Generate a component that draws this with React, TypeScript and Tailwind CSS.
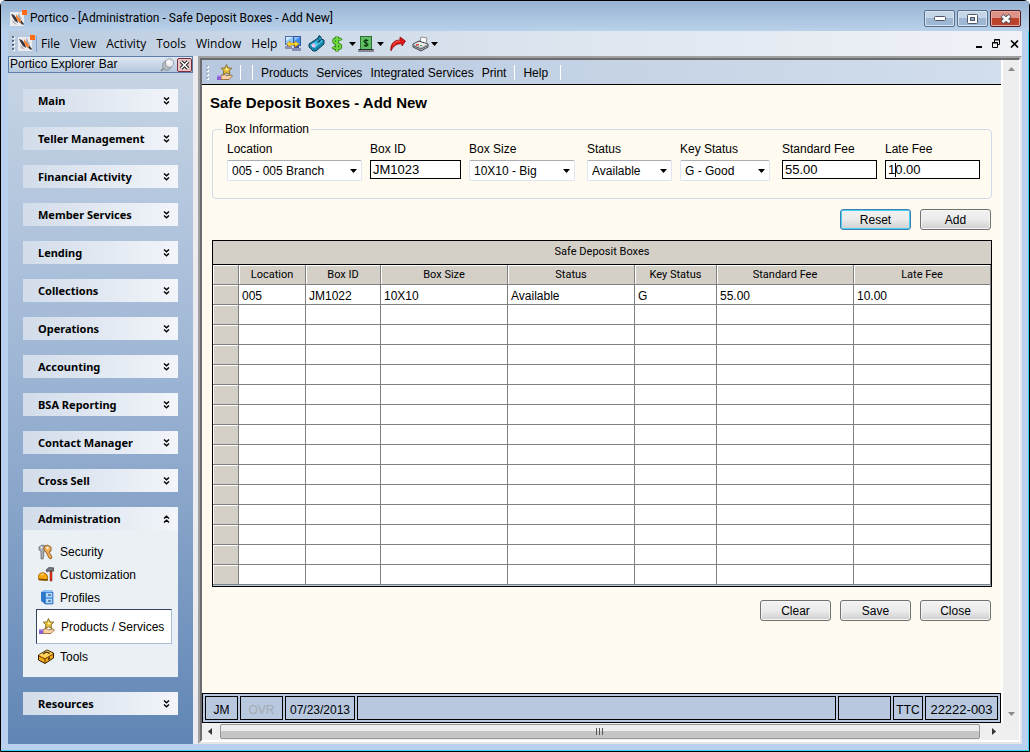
import type { ReactNode } from 'react';

interface Column {
  label: string;
  width: string;
}

const groups = [
  'Main',
  'Teller Management',
  'Financial Activity',
  'Member Services',
  'Lending',
  'Collections',
  'Operations',
  'Accounting',
  'BSA Reporting',
  'Contact Manager',
  'Cross Sell',
];

const columns: Column[] = [
  { label: 'Location', width: 'w-[67px]' },
  { label: 'Box ID', width: 'w-[75px]' },
  { label: 'Box Size', width: 'w-[127px]' },
  { label: 'Status', width: 'w-[127px]' },
  { label: 'Key Status', width: 'w-[82px]' },
  { label: 'Standard Fee', width: 'w-[137px]' },
  { label: 'Late Fee', width: 'w-[137px]' },
];

const rows: string[][] = [['005', 'JM1022', '10X10', 'Available', 'G', '55.00', '10.00']];
const ROW_COUNT = 15;

/* ---------- Icons ---------- */

function PorticoLogo() {
  return (
    <svg width="17" height="17" viewBox="0 0 17 17" aria-hidden="true">
      <rect x="0" y="2" width="14" height="14" fill="#ececee" />
      <path d="M1 4l3 1 3 4 1 4-3-2-2-3z" fill="#33363d" />
      <path d="M8 9l3 1 3 4-1 1-4-3z" fill="#33363d" />
      <path d="M2 10l3 2 2 3-4-2z" fill="#b4b7bd" />
      <path d="M9 2l1 4 2 3-3 1-2-1z" fill="#a9adb4" />
      <path d="M6 4l2 3 3 3 0 3-3-2-2-3z" fill="#f58233" />
      <rect x="12" y="0" width="5" height="5" fill="#ff6a13" />
    </svg>
  );
}

function StarHandIcon() {
  return (
    <svg width="16" height="17" viewBox="0 0 16 17" aria-hidden="true">
      <path d="M9.500 .5l1.500 3.400 3.800.3-2.700 2.600.8 3.700-3.400-1.700-3.400 1.700.8-3.700L4.200 4.200 8 3.900z" fill="#e9bd35" stroke="#7d6a2b" strokeWidth=".9" />
      <path d="M9.500 3l.8 2 2 .4-2 1.100-1.800-.4z" fill="#fdf0a0" />
      <path d="M4 11.500l4-1 1.500 1.500 4.500-1 1.500 1-3.500 3.500H4z" fill="#f9d3a6" stroke="#8d5c2b" strokeWidth=".8" />
      <path d="M0 11h4v5H0z" fill="#8a5fd6" />
      <path d="M0 11h4v1.500H0z" fill="#b79cf0" />
    </svg>
  );
}

function MonitorsIcon() {
  return (
    <svg width="18" height="16" viewBox="0 0 18 16" aria-hidden="true">
      <rect x="1.500" y=".5" width="8" height="8" fill="#8cc6ff" stroke="#4a6fae" />
      <rect x="9.500" y=".5" width="7" height="9" fill="#3f8cf0" stroke="#36599a" />
      <path d="M2 1h7L2 5z" fill="#d3ebff" />
      <path d="M10 1h6l-6 4z" fill="#86bbfa" />
      <path d="M1 10h7v3H1zM8 12h9v3H8z" fill="#8a8fb8" />
      <path d="M10 10h5v2h-5zM3 9h3v1H3z" fill="#4a4f86" />
      <path d="M2.500 8L6 5v2h5V5l4 3-4 3V9H6v2z" fill="#ffd83a" stroke="#b58b00" strokeWidth=".6" />
    </svg>
  );
}

function PhoneIcon() {
  return (
    <svg width="17" height="17" viewBox="0 0 17 17" aria-hidden="true">
      <path d="M1 9l9-6 1-2.500L13 2v2l3 1v4l-8 7H5l-4-4z" fill="#1487ad" stroke="#0e3c58" strokeWidth="1" />
      <path d="M2 10l10-6 3 2-8 7z" fill="#4cc3e2" />
      <path d="M11 1l2 1v3l-2 1z" fill="#2aa6cc" stroke="#0e3c58" strokeWidth=".5" />
      <circle cx="5.500" cy="10.500" r="2" fill="#f6bdea" />
      <path d="M9 7l3-2 1 1-3 2z" fill="#0e3c58" />
    </svg>
  );
}

function DollarIcon() {
  return (
    <svg width="12" height="16" viewBox="0 0 12 16" aria-hidden="true">
      <path d="M10 4.500C9 2.500 3 2.500 3 5.200c0 3 6.500 2.300 6.500 5.200 0 2.600-6 2.600-7.500.3M6 .5v15" fill="none" stroke="#2a7a12" strokeWidth="3.600" />
      <path d="M10 4.500C9 2.500 3 2.500 3 5.200c0 3 6.500 2.300 6.500 5.200 0 2.600-6 2.600-7.500.3M6 1v14" fill="none" stroke="#6fd63c" strokeWidth="2" />
    </svg>
  );
}

function CashIcon() {
  return (
    <svg width="16" height="16" viewBox="0 0 16 16" aria-hidden="true">
      <rect x="2.500" y=".5" width="11" height="13" fill="#5fc063" stroke="#2f6e35" />
      <path d="M10 5C9.500 3.800 6 3.800 6 5.500S10 7 10 8.700 6.500 10.200 6 9M8 3v8" fill="none" stroke="#0a330f" strokeWidth="1.100" />
      <path d="M0 13h16v3H0z" fill="#85888e" />
      <path d="M1 13h14v1H1z" fill="#2c2e33" />
    </svg>
  );
}

function RedArrowIcon() {
  return (
    <svg width="16" height="16" viewBox="0 0 16 16" aria-hidden="true">
      <path d="M1 15C0 8 4 4 10 4V1l5.500 4-3.500 5V8C7 7 3 10 1 15z" fill="#e01515" stroke="#8c0a0a" strokeWidth=".8" />
      <path d="M3 9c2-3 4-4 7-4" fill="none" stroke="#ff7b6b" strokeWidth=".8" />
    </svg>
  );
}

function PrinterIcon() {
  return (
    <svg width="17" height="16" viewBox="0 0 17 16" aria-hidden="true">
      <path d="M8 6l1-5 6 1-1 6z" fill="#fff" stroke="#777" strokeWidth=".8" />
      <path d="M1 8l6-3 9 3v3l-7 4-8-4z" fill="#b9bbbf" stroke="#3f4246" strokeWidth="1" />
      <path d="M2 8l5-2 8 2-6 3z" fill="#eceeef" />
      <path d="M2 10l7 3 6-3" fill="none" stroke="#55585c" strokeWidth="1" />
      <path d="M4 8h3v1.500H4z" fill="#d64040" />
      <path d="M8 9h2v1H8z" fill="#39a539" />
    </svg>
  );
}

function KeysIcon() {
  return (
    <svg width="15" height="16" viewBox="0 0 15 16" aria-hidden="true">
      <path d="M1 3l3-2 4 1v4L6 7v2l-1 1 1 1-1 4H3V7L1 6z" fill="#a9acb1" stroke="#6a6d72" strokeWidth=".8" />
      <path d="M6 3l3-2 4 2v4l-2 1 3 5-1 2-2-1-3-6-2-2z" fill="#efae55" stroke="#8f5a1b" strokeWidth=".9" />
      <circle cx="9.500" cy="4" r="1.300" fill="#fff3dc" />
      <circle cx="3.500" cy="3.500" r="1" fill="#fff" />
    </svg>
  );
}

function HelmetHammerIcon() {
  return (
    <svg width="16" height="15" viewBox="0 0 16 15" aria-hidden="true">
      <path d="M0 11c0-4 3-6 6-5 3 .5 4 3 3.500 6L9 13.500 1 13z" fill="#f8a80c" stroke="#8d5600" strokeWidth=".8" />
      <path d="M3 8c1-1 2-1 3-1" stroke="#ffe492" strokeWidth="1.200" />
      <path d="M1 12l9 1" stroke="#5d3800" strokeWidth="1" />
      <path d="M12 4h2v10h-2z" fill="#e0361c" stroke="#7e1609" strokeWidth=".5" />
      <path d="M8 3l3-2.500L16 1v3h-5L9 5z" fill="#777b80" stroke="#34373b" strokeWidth=".7" />
    </svg>
  );
}

function CabinetIcon() {
  return (
    <svg width="14" height="15" viewBox="0 0 14 15" aria-hidden="true">
      <path d="M1 2l4-2h7v14H5l-4-3z" fill="#2f78cc" />
      <path d="M5 2h8v12H5z" fill="#5ba3ea" stroke="#1d55a3" strokeWidth=".6" />
      <path d="M1 2l4-2h7l1 2H5z" fill="#8fc3f6" />
      <path d="M6 3h6v4H6zM6 9h6v4H6z" fill="#b5d9fb" />
      <path d="M8 5h3M8 11h3" stroke="#12396f" strokeWidth="1.200" />
    </svg>
  );
}

function ToolboxIcon() {
  return (
    <svg width="16" height="15" viewBox="0 0 16 15" aria-hidden="true">
      <path d="M.5 6L9 1l6.500 3v5L7 14.500.5 11z" fill="#f2a818" stroke="#2e1d00" strokeWidth="1" />
      <path d="M1 6l8-4.500L15 4.500 7 9z" fill="#ffd35c" />
      <path d="M1 7l6 3 8-5M7 10v4" fill="none" stroke="#6b3f00" strokeWidth="1" />
      <path d="M5 5l3-2 3 1v1" fill="none" stroke="#2e1d00" strokeWidth="1.100" />
      <path d="M10 9l2-1v2l-2 1z" fill="#4a2d00" />
    </svg>
  );
}

function PinIcon() {
  return (
    <svg width="15" height="14" viewBox="0 0 15 14" aria-hidden="true">
      <path d="M1 13l4-4" stroke="#777" strokeWidth="1.200" />
      <ellipse cx="7" cy="7.500" rx="4.500" ry="4.800" fill="#b5b9c0" stroke="#85898f" strokeWidth=".7" />
      <circle cx="9.500" cy="5" r="4.200" fill="#e9ebef" stroke="#888c93" strokeWidth=".8" />
      <circle cx="8.500" cy="4" r="1.500" fill="#fff" />
    </svg>
  );
}

function DoubleChevron({ up = false }: { up?: boolean }) {
  return (
    <svg width="7" height="8" viewBox="0 0 7 8" className={up ? 'rotate-180' : ''} aria-hidden="true">
      <path d="M1 .5l2.500 2.300L6 .5M1 4.500l2.500 2.300L6 4.500" fill="none" stroke="#000" strokeWidth="1.400" />
    </svg>
  );
}

function DownArrow({ className = '' }: { className?: string }) {
  return (
    <svg width="7" height="4" viewBox="0 0 7 4" className={className} aria-hidden="true">
      <path d="M0 0h7L3.500 4z" fill="#000" />
    </svg>
  );
}

/* ---------- Small parts ---------- */

function Grip({ color }: { color: string }) {
  return (
    <svg width="3" height="15" viewBox="0 0 3 15" aria-hidden="true">
      {[0, 4, 8, 12].map((y) => (
        <g key={y}>
          <rect x="1" y={y + 1} width="2" height="2" fill="#fff" />
          <rect x="0" y={y} width="2" height="2" fill={color} />
        </g>
      ))}
    </svg>
  );
}

function Separator() {
  return <span className="h-[15px] w-px bg-white" />;
}

function PushButton({ children, focused = false }: { children: ReactNode; focused?: boolean }) {
  return (
    <button
      type="button"
      className={`h-[21px] w-[71px] rounded-[3px] border bg-linear-to-b from-[#f2f2f2] via-[#ebebeb] via-50% to-[#cfcfcf] pt-[2px] text-center text-[12px] leading-[17px] ${
        focused ? 'border-[#3c7fb1] shadow-[inset_0_0_0_1px_#48d0f5]' : 'border-[#707070] shadow-[inset_0_0_0_1px_#f6f6f6]'
      }`}
    >
      {children}
    </button>
  );
}

function Field({ id, label, className, children }: { id: string; label: string; className?: string; children: ReactNode }) {
  return (
    <div className={`flex flex-col ${className ?? ''}`}>
      <label htmlFor={id} className="mb-[3px] h-4 text-[12px] leading-4">
        {label}
      </label>
      {children}
    </div>
  );
}

function SelectBox({ id, value }: { id: string; value: string }) {
  return (
    <div className="relative">
      <select
        id={id}
        defaultValue={value}
        className="block h-[21px] w-full appearance-none rounded-[2px] border border-[#dfe5f0] border-t-[#abadb3] bg-white pl-1 pt-[2px] text-[12px] leading-[17px]"
      >
        <option>{value}</option>
      </select>
      <DownArrow className="pointer-events-none absolute top-[9px] right-[5px]" />
    </div>
  );
}

function TextBox({ id, value }: { id: string; value: string }) {
  return <input id={id} type="text" defaultValue={value} className="block h-[19px] w-full border border-black bg-white px-[2px] text-[13px] leading-[17px]" />;
}

/* ---------- Window chrome ---------- */

function TitleBar() {
  return (
    <header className="flex h-[30px] items-start bg-linear-to-b from-[#98b3d3] to-[#b9d1ea] pl-2 pr-2">
      <span className="mt-[9px] ml-px">
        <PorticoLogo />
      </span>
      <h1 className="ml-[3px] flex-1 pt-[9px] font-[Roboto,sans-serif] text-[12px] leading-4">
        Portico - [Administration - Safe Deposit Boxes - Add New]
      </h1>
      <div className="mt-[9px] flex gap-[2px]">
        <button type="button" aria-label="Minimize" className="flex h-[17px] w-[31px] items-center justify-center rounded-[2px] border border-[#5a6f8c] bg-linear-to-b from-[#c5d6e9] from-50% to-[#9db7d4] to-50% shadow-[inset_0_0_0_1px_#d5e3f2]">
          <svg width="12" height="5" viewBox="0 0 12 5" aria-hidden="true">
            <rect x=".5" y=".5" width="11" height="4" rx="1" fill="#fff" stroke="#535666" />
          </svg>
        </button>
        <button type="button" aria-label="Maximize" className="flex h-[17px] w-[31px] items-center justify-center rounded-[2px] border border-[#5a6f8c] bg-linear-to-b from-[#c5d6e9] from-50% to-[#9db7d4] to-50% shadow-[inset_0_0_0_1px_#d5e3f2]">
          <svg width="11" height="10" viewBox="0 0 11 10" aria-hidden="true">
            <rect x=".5" y=".5" width="10" height="9" rx="1" fill="#fff" stroke="#535666" />
            <rect x="3.500" y="3.500" width="4" height="3" fill="#8fa9c8" stroke="#535666" />
          </svg>
        </button>
        <button type="button" aria-label="Close window" className="flex h-[17px] w-[31px] items-center justify-center rounded-[2px] border border-[#4f1b24] bg-linear-to-b from-[#dc9285] from-50% to-[#bb432c] to-50% shadow-[inset_0_0_0_1px_#e5aca3]">
          <svg width="12" height="10" viewBox="0 0 12 10" aria-hidden="true">
            <path d="M2 1.500l8 7M10 1.500l-8 7" stroke="#535666" strokeWidth="4.400" />
            <path d="M2.500 2l7 6M9.500 2l-7 6" stroke="#fff" strokeWidth="2.600" />
          </svg>
        </button>
      </div>
    </header>
  );
}

function MenuBar() {
  return (
    <nav className="flex h-[25px] items-center bg-linear-to-r from-[#b9cadf] via-[#dbe4ee] to-[#f0f2f7] pl-1 pr-[3px] font-['Open_Sans',sans-serif] text-[12px] leading-4">
      <Grip color="#5a6f92" />
      <span className="ml-[3px]">
        <PorticoLogo />
      </span>
      <span className="ml-px h-4 w-px bg-[#7ba0d4]" />
      <div className="ml-1 flex gap-[10px]">
        <button type="button">File</button>
        <button type="button">View</button>
        <button type="button">Activity</button>
        <button type="button">Tools</button>
        <button type="button">Window</button>
        <button type="button">Help</button>
      </div>
      <div className="ml-[7px] flex flex-1 items-center gap-[6px]">
        <button type="button" aria-label="Connections"><MonitorsIcon /></button>
        <button type="button" aria-label="Phone"><PhoneIcon /></button>
        <button type="button" aria-label="Currency" className="flex items-center gap-[6px]">
          <DollarIcon />
          <DownArrow />
        </button>
        <button type="button" aria-label="Cash drawer" className="-ml-1 flex items-center gap-[3px]">
          <CashIcon />
          <DownArrow />
        </button>
        <button type="button" aria-label="Forward"><RedArrowIcon /></button>
        <button type="button" aria-label="Print" className="flex items-center gap-[2px]">
          <PrinterIcon />
          <DownArrow />
        </button>
      </div>
      <div className="flex items-center gap-[10px]">
        <button type="button" aria-label="Minimize document">
          <svg width="6" height="9" viewBox="0 0 6 9" aria-hidden="true"><path d="M0 7h6v2H0z" /></svg>
        </button>
        <button type="button" aria-label="Restore document">
          <svg width="8" height="9" viewBox="0 0 8 9" fill="none" stroke="#000" aria-hidden="true">
            <path d="M2.500 3V.5h5v5H6M2 1h6" />
            <path d="M.5 3.500h5v5h-5zM0 4h6" />
          </svg>
        </button>
        <button type="button" aria-label="Close document">
          <svg width="9" height="8" viewBox="0 0 9 8" aria-hidden="true"><path d="M1 .5l7 7M8 .5l-7 7" stroke="#000" strokeWidth="1.600" /></svg>
        </button>
      </div>
    </nav>
  );
}

/* ---------- Explorer bar ---------- */

function GroupHeader({ label, open = false }: { label: string; open?: boolean }) {
  return (
    <button
      type="button"
      aria-expanded={open}
      className="flex h-[23px] w-full items-center justify-between bg-linear-to-r from-[#d2dcea] to-[#f2f5fa] pr-2 pl-[15px] text-left font-['Noto_Sans',sans-serif] text-[11px] leading-4 font-bold"
    >
      {label}
      <DoubleChevron up={open} />
    </button>
  );
}

function ExplorerBar() {
  return (
    <aside className="flex w-[185px] shrink-0 flex-col">
      <div className="flex h-[17px] items-center border border-[#5f7ea8] bg-linear-to-b from-[#dfe8f2] to-[#b5c7de]">
        <h2 className="flex-1 pl-px text-[12px] leading-[15px]">Portico Explorer Bar</h2>
        <button type="button" aria-label="Auto hide"><PinIcon /></button>
        <button type="button" aria-label="Close explorer bar" className="ml-[2px] flex h-[14px] w-[15px] items-center justify-center rounded-[2px] border border-[#7c2d3a] bg-[#e8c6c6]">
          <svg width="11" height="10" viewBox="0 0 11 10" aria-hidden="true">
            <path d="M2 1.500l7 7M9 1.500l-7 7" stroke="#222" strokeWidth="3.600" />
            <path d="M2 1.500l7 7M9 1.500l-7 7" stroke="#fff" strokeWidth="1.600" />
          </svg>
        </button>
      </div>
      <div className="flex flex-1 flex-col gap-[15px] bg-linear-to-b from-[#c6d4e5] via-[#9db5d4] via-45% to-[#6186b5] px-[15px] pt-4 pb-4">
        {groups.map((group) => (
          <GroupHeader key={group} label={group} />
        ))}
        <section>
          <GroupHeader label="Administration" open />
          <ul className="bg-[#eaf0f4] pt-[10px] pb-[9px] text-[12px] leading-4">
            <li className="flex h-[23px] items-center pl-[15px]">
              <span className="w-[22px]"><KeysIcon /></span>
              <a href="#security">Security</a>
            </li>
            <li className="flex h-[23px] items-center pl-[15px]">
              <span className="w-[22px]"><HelmetHammerIcon /></span>
              <a href="#customization">Customization</a>
            </li>
            <li className="flex h-[23px] items-center pl-[15px]">
              <span className="w-[22px] pl-[2px]"><CabinetIcon /></span>
              <a href="#profiles">Profiles</a>
            </li>
            <li className="mr-[6px] ml-[13px] flex h-[35px] items-center border border-t-[#33425e] border-r-[#a9bdd9] border-b-[#a9bdd9] border-l-[#33425e] bg-white pl-[2px]">
              <span className="w-[22px]"><StarHandIcon /></span>
              <a href="#products" className="whitespace-nowrap">Products / Services</a>
            </li>
            <li className="mt-px flex h-[23px] items-center pl-[15px]">
              <span className="w-[22px]"><ToolboxIcon /></span>
              <a href="#tools">Tools</a>
            </li>
          </ul>
        </section>
        <GroupHeader label="Resources" />
      </div>
    </aside>
  );
}

/* ---------- Document ---------- */

function DocumentToolbar() {
  return (
    <div className="flex h-[25px] items-center border-b border-black bg-linear-to-r from-[#b7c8df] to-[#d2deeb] pl-1 text-[12px] leading-4">
      <Grip color="#a3b2c8" />
      <button type="button" aria-label="Products and services" className="ml-2"><StarHandIcon /></button>
      <span className="ml-[7px] flex gap-[11px]">
        <Separator />
        <Separator />
      </span>
      <div className="ml-2 flex gap-2 pt-[2px]">
        <button type="button">Products</button>
        <button type="button">Services</button>
        <button type="button">Integrated Services</button>
        <button type="button">Print</button>
      </div>
      <span className="mr-2 ml-2 flex"><Separator /></span>
      <button type="button" className="pt-[2px]">Help</button>
      <span className="ml-3 flex"><Separator /></span>
    </div>
  );
}

function BoxInformation() {
  return (
    <fieldset className="mr-[9px] ml-[10px] h-[78px] rounded-[4px] border border-[#d0dae8] pr-[11px] pl-[14px]">
      <legend className="-ml-1 px-[2px] text-[12px] leading-4">Box Information</legend>
      <div className="grid grid-cols-[143fr_99fr_118fr_93fr_102fr_103fr_95fr] pt-1">
        <Field id="location" label="Location" className="pr-2">
          <SelectBox id="location" value="005 - 005 Branch" />
        </Field>
        <Field id="box-id" label="Box ID" className="pr-2">
          <TextBox id="box-id" value="JM1023" />
        </Field>
        <Field id="box-size" label="Box Size" className="pr-3">
          <SelectBox id="box-size" value="10X10 - Big" />
        </Field>
        <Field id="status" label="Status" className="pr-2">
          <SelectBox id="status" value="Available" />
        </Field>
        <Field id="key-status" label="Key Status" className="pr-3">
          <SelectBox id="key-status" value="G - Good" />
        </Field>
        <Field id="standard-fee" label="Standard Fee" className="pr-2">
          <TextBox id="standard-fee" value="55.00" />
        </Field>
        <Field id="late-fee" label="Late Fee">
          <div className="relative">
            <TextBox id="late-fee" value="10.00" />
            <span className="absolute top-[3px] left-[10px] h-[14px] w-px bg-black" />
          </div>
        </Field>
      </div>
    </fieldset>
  );
}

function BoxesTable() {
  return (
    <div className="mr-[9px] ml-[10px] border border-black bg-[#b7c8df] pb-px">
      <table className="w-full table-fixed border-separate border-spacing-0">
        <caption className="h-6 border-b border-black bg-[#d4d0c8] text-center font-[Roboto,sans-serif] text-[11px] leading-[21px]">Safe Deposit Boxes</caption>
        <colgroup>
          <col className="w-[26px]" />
          {columns.map((column) => (
            <col key={column.label} className={column.width} />
          ))}
        </colgroup>
        <thead>
          <tr className="h-5 bg-[#d4d0c8] font-[Roboto,sans-serif] text-[11px] leading-[18px]">
            <th className="border-r border-b border-[#808080] p-0 shadow-[inset_1px_1px_0_#fff]" aria-label="Row" />
            {columns.map((column) => (
              <th key={column.label} scope="col" className="border-r border-b border-[#808080] p-0 text-center font-normal shadow-[inset_1px_1px_0_#fff]">
                {column.label}
              </th>
            ))}
          </tr>
        </thead>
        <tbody>
          {Array.from({ length: ROW_COUNT }, (_, row) => (
            <tr key={row} className="h-5 bg-white text-[12px] leading-4">
              <td className="border-r border-b border-[#808080] bg-[#d4d0c8] p-0 shadow-[inset_1px_1px_0_#fff]" />
              {columns.map((column, i) => (
                <td key={column.label} className="border-r border-b border-[#808080] p-0 pt-[3px] pl-[3px]">
                  {rows[row]?.[i]}
                </td>
              ))}
            </tr>
          ))}
        </tbody>
      </table>
    </div>
  );
}

function StatusBar() {
  return (
    <footer className="flex h-[30px] gap-[2px] border border-black bg-[#b7c8df] p-[2px] text-[12px] leading-[26px]">
      <span className="w-[33px] border border-black text-center">JM</span>
      <span className="w-[43px] border border-black text-center text-[#a5abb2]">OVR</span>
      <span className="w-[70px] border border-black text-center">07/23/2013</span>
      <span className="flex-1 border border-black" />
      <span className="w-[53px] border border-black" />
      <span className="w-[30px] border border-black text-center">TTC</span>
      <span className="w-[73px] border border-black text-center text-[13px]">22222-003</span>
    </footer>
  );
}

function DocumentWindow() {
  return (
    <main className="flex min-w-0 flex-1 border-t-2 border-r-2 border-b-2 border-l-2 border-t-[#a0a0a0] border-r-[#e6e6e8] border-b-[#e6e6e8] border-l-[#a0a0a0]">
      <div className="flex min-w-0 flex-1 flex-col border-t-2 border-r border-b-2 border-l-2 border-t-[#6c6c6e] border-r-white border-b-white border-l-[#6c6c6e]">
        <div className="flex flex-1">
          <div className="flex min-w-0 flex-1 flex-col bg-[#fffbf0]">
            <DocumentToolbar />
            <h2 className="mt-2 ml-2 text-[15px] leading-5 font-bold">Safe Deposit Boxes - Add New</h2>
            <div className="mt-2">
              <BoxInformation />
            </div>
            <div className="my-[10px] mr-[10px] flex justify-end gap-[9px]">
              <PushButton focused>Reset</PushButton>
              <PushButton>Add</PushButton>
            </div>
            <BoxesTable />
            <div className="mt-[13px] mr-[10px] flex flex-1 items-start justify-end gap-[9px]">
              <PushButton>Clear</PushButton>
              <PushButton>Save</PushButton>
              <PushButton>Close</PushButton>
            </div>
            <StatusBar />
          </div>
          <div className="flex w-[18px] flex-col items-center justify-between border-l-2 border-white bg-[#eeeeee] py-[7px]">
            <svg width="7" height="4" viewBox="0 0 7 4" aria-hidden="true"><path d="M0 4h7L3.500 0z" fill="#8a8a8a" /></svg>
            <svg width="7" height="4" viewBox="0 0 7 4" aria-hidden="true"><path d="M0 0h7L3.500 4z" fill="#8a8a8a" /></svg>
          </div>
        </div>
        <div className="flex h-[17px] items-center bg-[#efefef] pr-[23px] pl-[6px]">
          <svg width="4" height="7" viewBox="0 0 4 7" aria-hidden="true"><path d="M4 0v7L0 3.500z" fill="#333" /></svg>
          <span className="mr-3 ml-2 flex h-[15px] flex-1 items-center justify-center rounded-[2px] border border-[#979797] bg-linear-to-b from-[#ededed] from-45% to-[#c5c5c8] to-50%">
            <svg width="8" height="7" viewBox="0 0 8 7" aria-hidden="true"><path d="M.5 0v7M3.500 0v7M6.500 0v7" stroke="#555" /></svg>
          </span>
          <svg width="4" height="7" viewBox="0 0 4 7" aria-hidden="true"><path d="M0 0v7l4-3.500z" fill="#333" /></svg>
        </div>
      </div>
    </main>
  );
}

export default function App() {
  return (
    <div className="flex min-h-screen flex-col rounded-t-[6px] border border-black bg-[#b9d1ee] font-['Liberation_Sans',Arial,sans-serif] text-black">
      <TitleBar />
      <div className="flex flex-1 flex-col border-r border-b border-[#35d4ec] pr-[6px] pb-[6px] pl-[7px]">
        <MenuBar />
        <div className="flex flex-1 bg-[#ececf0]">
          <ExplorerBar />
          <div className="w-[5px]" />
          <DocumentWindow />
        </div>
      </div>
    </div>
  );
}
